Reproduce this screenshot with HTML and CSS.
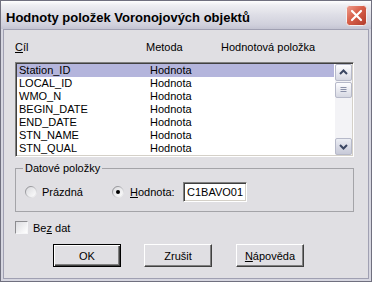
FILE: index.html
```html
<!DOCTYPE html>
<html>
<head>
<meta charset="utf-8">
<title>Hodnoty položek Voronojových objektů</title>
<link rel="stylesheet" href="styles.css">
</head>
<body>
<div class="window">
  <div class="titlebar">
    <span class="title">Hodnoty položek Voronojových objektů</span>
    <div class="close">
      <svg width="21" height="21" viewBox="0 0 21 21">
        <defs>
          <linearGradient id="cg" x1="0" y1="0" x2="1" y2="1">
            <stop offset="0" stop-color="#f0a090"/>
            <stop offset="0.45" stop-color="#d8604a"/>
            <stop offset="1" stop-color="#b03a2a"/>
          </linearGradient>
        </defs>
        <rect x="0.5" y="0.5" width="20" height="20" rx="3" fill="url(#cg)" stroke="#f4f0f0"/>
        <path d="M6 6 L15 15 M15 6 L6 15" stroke="#fff" stroke-width="2.2" stroke-linecap="round"/>
      </svg>
    </div>
  </div>
  <div class="client">
    <div class="headers">
      <span class="h-cil"><u>C</u>íl</span>
      <span class="h-met">Metoda</span>
      <span class="h-hod">Hodnotová položka</span>
    </div>
    <div class="listbox">
      <div class="rows">
        <div class="row sel"><span class="c1">Station_ID</span><span class="c2">Hodnota</span></div>
        <div class="row"><span class="c1">LOCAL_ID</span><span class="c2">Hodnota</span></div>
        <div class="row"><span class="c1">WMO_N</span><span class="c2">Hodnota</span></div>
        <div class="row"><span class="c1">BEGIN_DATE</span><span class="c2">Hodnota</span></div>
        <div class="row"><span class="c1">END_DATE</span><span class="c2">Hodnota</span></div>
        <div class="row"><span class="c1">STN_NAME</span><span class="c2">Hodnota</span></div>
        <div class="row"><span class="c1">STN_QUAL</span><span class="c2">Hodnota</span></div>
      </div>
      <div class="scrollbar">
        <div class="sb-btn">
          <svg width="15" height="15" viewBox="0 0 15 15"><path d="M4 9 L7.5 5.5 L11 9" fill="none" stroke="#3a4662" stroke-width="2"/></svg>
        </div>
        <div class="sb-thumb">
          <svg width="15" height="14" viewBox="0 0 15 14"><path d="M4.5 4.5 H10.5 M4.5 6.5 H10.5 M4.5 8.5 H10.5" stroke="#8a90a8" stroke-width="1"/></svg>
        </div>
        <div class="sb-track"></div>
        <div class="sb-btn down">
          <svg width="15" height="15" viewBox="0 0 15 15"><path d="M4 6 L7.5 9.5 L11 6" fill="none" stroke="#3a4662" stroke-width="2"/></svg>
        </div>
      </div>
    </div>
    <fieldset class="group">
      <legend>Datové položky</legend>
      <div class="radios">
        <label class="radio r1">
          <svg class="rb" width="12" height="12" viewBox="0 0 12 12">
            <defs>
              <linearGradient id="rf" x1="0" y1="0" x2="1" y2="1">
                <stop offset="0" stop-color="#d8d8dc"/>
                <stop offset="1" stop-color="#ffffff"/>
              </linearGradient>
              <linearGradient id="rs" x1="0" y1="0" x2="1" y2="1">
                <stop offset="0" stop-color="#7c7c80"/>
                <stop offset="0.6" stop-color="#c8c8cc"/>
                <stop offset="1" stop-color="#ffffff"/>
              </linearGradient>
            </defs>
            <circle cx="6" cy="6" r="5.5" fill="url(#rf)" stroke="url(#rs)"/>
          </svg>
          <span>Prázdná</span>
        </label>
        <label class="radio r2">
          <svg class="rb" width="12" height="12" viewBox="0 0 12 12">
            <circle cx="6" cy="6" r="5.5" fill="url(#rf)" stroke="url(#rs)"/>
            <circle cx="6" cy="6" r="2" fill="#000"/>
          </svg>
          <span><u>H</u>odnota:</span>
        </label>
        <div class="input">C1BAVO01</div>
      </div>
    </fieldset>
    <label class="check">
      <span class="cb"></span>
      <span>Be<u>z</u> dat</span>
    </label>
    <div class="buttons">
      <div class="btn default">OK</div>
      <div class="btn b2">Zrušit</div>
      <div class="btn b3"><u>N</u>ápověda</div>
    </div>
  </div>
</div>
</body>
</html>
```
FILE: styles.css
```css
html, body {
  margin: 0;
  padding: 0;
  background: #e0dfe3;
}
body {
  font-family: "Liberation Sans", Arial, sans-serif;
  font-size: 11px;
  color: #000;
}
u { text-decoration: underline; text-underline-offset: 1px; }

.window {
  width: 372px;
  height: 282px;
  box-sizing: border-box;
  border: 1px solid #70707f;
  background: #d6d6e0;
  display: flex;
  flex-direction: column;
}

.titlebar {
  height: 28px;
  flex: none;
  display: flex;
  align-items: center;
  justify-content: space-between;
  padding: 0 4px 0 5px;
  background: linear-gradient(to bottom, #ffffff 0, #eeeef2 15%, #dedee6 50%, #d0d0dc 85%, #c4c4d2 100%);
}
.title {
  font-weight: bold;
  font-size: 13px;
  line-height: 15px;
  padding-top: 4px;
  color: #000;
}
.close {
  width: 21px;
  height: 21px;
  display: flex;
}

.client {
  flex: 1;
  margin: 0 2px 2px;
  border: 1px solid #a0a0b2;
  background: #e0dfe3;
  display: flex;
  flex-direction: column;
}

.headers {
  display: flex;
  padding-top: 11px;
  line-height: 13px;
  height: 13px;
}
.h-cil { margin-left: 11px; width: 131px; }
.h-met { width: 75px; }

.listbox {
  margin: 8px 0 0 11px;
  width: 339px;
  height: 95px;
  box-sizing: border-box;
  border: 1px solid;
  border-color: #808080 #ffffff #ffffff #808080;
  box-shadow: inset 1px 1px #404040, inset -1px -1px #d4d0c8;
  padding: 1px;
  background: #fff;
  display: flex;
  overflow: hidden;
}
.rows {
  flex: 1;
  padding-right: 1px;
}
.row {
  height: 13px;
  line-height: 13px;
  display: flex;
  white-space: nowrap;
}
.row.sel { background: #b4b5dc; }
.c1 { width: 133px; box-sizing: border-box; padding-left: 2px; }

.scrollbar {
  width: 17px;
  display: flex;
  flex-direction: column;
  background: #f3f3f6;
}
.sb-btn, .sb-thumb {
  box-sizing: border-box;
  height: 17px;
  border: 1px solid #b6b9c9;
  border-radius: 2px;
  background: linear-gradient(to bottom, #fdfdff, #e6e7ee 60%, #d6d8e2);
  display: flex;
  align-items: center;
  justify-content: center;
}
.sb-thumb { height: 16px; margin-top: 1px; }
.sb-btn.down { background: linear-gradient(to bottom, #eceef4, #d4d6e2 60%, #c8cad8); }
.sb-track { flex: 1; }

.group {
  margin: 5px 0 0 11px;
  width: 339px;
  box-sizing: border-box;
  padding: 0 0 9px 0;
  border: 1px solid #a4a4a8;
  min-width: 0;
}
.group legend {
  margin-left: 7px;
  padding: 0 2px;
  line-height: 13px;
}
.radios {
  display: flex;
  align-items: center;
  height: 20px;
  margin-top: 7px;
  padding-left: 9px;
}
.radio {
  display: flex;
  align-items: center;
}
.rb { flex: none; }
.r1 { width: 87px; }
.r1 .rb { margin-right: 5px; }
.r2 .rb { margin-right: 6px; }
.r2 { width: 71px; }

.input {
  width: 64px;
  height: 20px;
  box-sizing: border-box;
  border: 1px solid;
  border-color: #808080 #ffffff #ffffff #808080;
  box-shadow: inset 1px 1px #404040, inset -1px -1px #d4d0c8;
  background: #fff;
  line-height: 18px;
  padding-left: 3px;
}

.check {
  display: flex;
  align-items: center;
  margin: 9px 0 0 11px;
  height: 13px;
}
.cb {
  width: 13px;
  height: 13px;
  box-sizing: border-box;
  border: 1px solid;
  border-color: #8c8c90 #f6f6f8 #f6f6f8 #8c8c90;
  background: linear-gradient(135deg, #dcdce0, #ffffff);
  margin-right: 5px;
}

.buttons {
  display: flex;
  margin: 10px 0 0 49px;
}
.btn {
  width: 68px;
  height: 23px;
  box-sizing: border-box;
  border: 1px solid;
  border-color: #ffffff #404040 #404040 #ffffff;
  box-shadow: inset -1px -1px #808080;
  background: #e0dfe3;
  display: flex;
  align-items: center;
  justify-content: center;
}
.btn.default {
  border-color: #000;
  box-shadow: inset 1px 1px #ffffff, inset -1px -1px #404040, inset -2px -2px #808080;
}
.b2 { margin-left: 23px; }
.b3 { margin-left: 24px; }
```
